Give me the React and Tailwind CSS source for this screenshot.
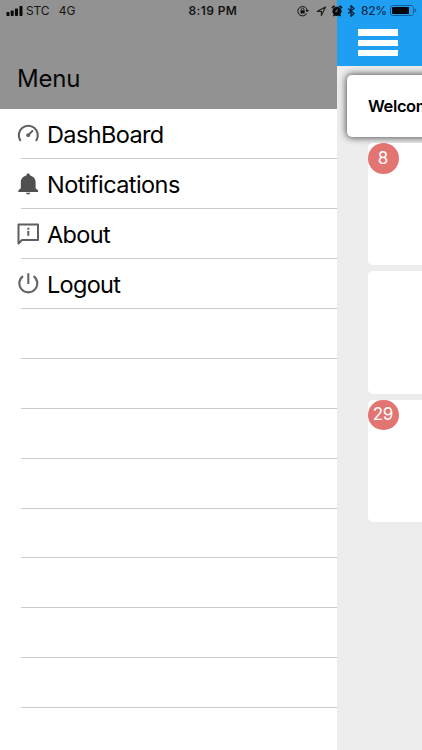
import React from 'react';

const iconClass = 'w-6 h-6 shrink-0';

const GaugeIcon = () => (
    <svg viewBox="0 0 24 24" className={iconClass} fill="none" stroke="#5f5f5f" strokeWidth="2.1" strokeLinecap="round">
        <path d="M4.200 18.200A9.500 9.500 0 1 1 20.400 18.200" />
        <path d="M12.200 13.200L16.400 9" strokeWidth="1.900" />
        <circle cx="12.200" cy="13.200" r="1.900" fill="#5f5f5f" stroke="none" />
    </svg>
);

const BellIcon = () => (
    <svg viewBox="0 0 24 24" className={iconClass} fill="#505050">
        <path d="M12.200 1.400c-1 0-1.700.7-1.700 1.600v.5C6.900 4.200 4.800 6.900 4.800 10.300v6L2.300 18.600v1.300h19.800V18.600l-2.500-2.300v-6c0-3.400-2.100-6.100-5.700-6.800V3c0-.9-.7-1.600-1.700-1.600z" />
        <path d="M10.100 20.800a2.100 1.800 0 0 0 4.200 0z" />
    </svg>
);

const InfoIcon = () => (
    <svg viewBox="0 0 24 24" className={iconClass} fill="none" stroke="#5f5f5f" strokeWidth="2" strokeLinejoin="round">
        <path d="M2.500 2.500H22V18H6L2.500 21.500Z" />
        <path d="M12.300 9V13.800M12.300 5.800V7.800" strokeWidth="2" />
    </svg>
);

const PowerIcon = () => (
    <svg viewBox="0 0 24 24" className={iconClass} fill="none" stroke="#656565" strokeWidth="2.1">
        <path d="M12.300 1.200V12M7 4.100A9 9 0 1 0 17.600 4.100" />
    </svg>
);

const menuItems = [
    { name: 'DashBoard', icon: GaugeIcon, text: 'tracking-[-0.62px]' },
    { name: 'Notifications', icon: BellIcon, text: 'tracking-[-0.57px]' },
    { name: 'About', icon: InfoIcon, text: 'tracking-[-0.65px]' },
    { name: 'Logout', icon: PowerIcon, text: 'tracking-[-0.7px]' },
];

const emptyRows = [1, 2, 3, 4, 5, 6, 7, 8];

const cards = [{ id: 1, count: 8 }, { id: 2 }, { id: 3, count: 29 }];

function StatusBar() {
    return (
        <div className="absolute inset-x-0 top-0 z-10 flex h-[22px] items-center pl-[6px] pr-[5px] text-[12px] text-[#141414]">
            <svg viewBox="0 0 17 11" className="h-[11px] w-[17px]" fill="#080808">
                <rect x="0.500" y="6" width="3" height="4" rx="0.800" />
                <rect x="4.700" y="4.500" width="3" height="5.500" rx="0.800" />
                <rect x="9" y="2.500" width="3" height="7.500" rx="0.800" />
                <rect x="13.500" y="0" width="3" height="10" rx="0.800" />
            </svg>
            <span className="ml-[3px] w-[33px] tracking-[-0.1px]">STC</span>
            <span className="w-[130px]">4G</span>
            <span className="w-[109px] font-semibold tracking-[0.4px]">8:19 PM</span>
            <svg viewBox="0 0 12 12" className="h-3 w-3 shrink-0" fill="none" stroke="#111">
                <path d="M9.700 8.400A4.700 4.700 0 1 1 10.200 5.500" />
                <path d="M8.400 5H12L10.200 7.300Z" fill="#111" stroke="none" />
                <rect x="3.500" y="5.300" width="4.200" height="3.200" fill="#111" stroke="none" />
                <path d="M4.400 5.500V4.300A1.200 1.200 0 0 1 6.800 4.300V5.500" strokeWidth="0.800" />
            </svg>
            <svg viewBox="0 0 11 11" className="ml-[7px] h-[11px] w-[11px] shrink-0" fill="none" stroke="#222" strokeWidth="1.200" strokeLinejoin="round">
                <path d="M9.500 1L1.300 5.300H5.400V9.600Z" />
            </svg>
            <svg viewBox="0 0 12 12" className="ml-[4px] h-3 w-3 shrink-0" fill="#070b10">
                <circle cx="6" cy="6.300" r="4.600" />
                <path d="M1 3.200A2 2 0 0 1 4 1.200ZM11 3.200A2 2 0 0 0 8 1.200ZM2 11L3.500 9.300L4.500 10.300ZM10 11L8.500 9.300L7.500 10.300Z" stroke="#070b10" strokeWidth="0.700" />
                <path d="M6 4V6.500H4.200" fill="none" stroke="#7e8b95" strokeWidth="0.800" />
            </svg>
            <svg viewBox="0 0 8 12" className="ml-[4px] h-3 w-2 shrink-0" fill="none" stroke="#06213a" strokeWidth="1.300">
                <path d="M1 3.500L7 8.500L4 11.300V0.700L7 3.500L1 8.500" />
            </svg>
            <span className="ml-[6px] w-[29px] tracking-[-0.250px] text-[#06213a]">82%</span>
            <svg viewBox="0 0 27 12" className="h-3 w-[27px] shrink-0">
                <rect x="0.500" y="0.500" width="23" height="10" rx="2.200" fill="none" stroke="#0e5e98" />
                <rect x="2" y="2" width="17" height="7" rx="0.800" fill="#02060a" />
                <path d="M25 3.800A2 2 0 0 1 25 7.200Z" fill="#0e5e98" stroke="#0e5e98" strokeWidth="0.600" />
            </svg>
        </div>
    );
}

function SideMenu() {
    return (
        <div className="w-[337px] shrink-0 bg-white">
            <div className="flex h-[109px] items-end bg-[#929292] pb-[12px] pl-[17px]">
                <h1 className="text-[24px] leading-9 tracking-[-0.2px] text-[#080808]">Menu</h1>
            </div>
            <ul>
                {menuItems.map(({ name, icon: Icon, text }) => (
                    <li key={name} className="flex h-[50px] pl-4">
                        <div className="flex w-[5px] items-center"><Icon /></div>
                        <div className="h-[50px] flex-1 border-b border-[#cbcbcb] pl-[26px]">
                            <span className={`block pt-[2px] text-[23.500px] leading-[47px] text-black ${text}`}>{name}</span>
                        </div>
                    </li>
                ))}
                {emptyRows.map((row) => (
                    <li key={row} className="ml-[21px] h-[49.900px] border-b border-[#cbcbcb]"></li>
                ))}
            </ul>
        </div>
    );
}

function Content() {
    return (
        <div className="w-[85px] shrink-0 overflow-hidden bg-[#ededed]">
            <div className="flex h-[66px] flex-col gap-1 bg-[#1f9ff2] pl-[21px] pt-[29px]">
                <div className="h-[7px] w-10 shrink-0 bg-white"></div>
                <div className="h-[6px] w-10 shrink-0 bg-white"></div>
                <div className="h-[6px] w-10 shrink-0 bg-white"></div>
            </div>
            <div className="ml-[10px] mt-[9px] flex h-[62px] w-[200px] items-center rounded-[5px] bg-white pl-[21px] shadow-[0_0_7px_1px_rgba(0,0,0,0.65)]">
                <span className="text-[16.500px] font-semibold tracking-[-0.4px] text-black">Welcome</span>
            </div>
            <div className="ml-[31px] mt-[6px] flex w-[200px] flex-col gap-[6px]">
                {cards.map((card) => (
                    <div key={card.id} className="h-[122.300px] rounded-[5px] bg-white">
                        {card.count && (
                            <div className="flex h-[30.500px] w-[30.500px] items-center justify-center rounded-full bg-[#e27472] pr-[1px] text-[17px] tracking-[-0.5px] text-white">{card.count}</div>
                        )}
                    </div>
                ))}
            </div>
        </div>
    );
}

function App() {
    return (
        <div className="relative flex h-[750px] w-[422px] overflow-hidden bg-white font-['Inter',sans-serif]">
            <SideMenu />
            <Content />
            <StatusBar />
        </div>
    );
}

export default App;
